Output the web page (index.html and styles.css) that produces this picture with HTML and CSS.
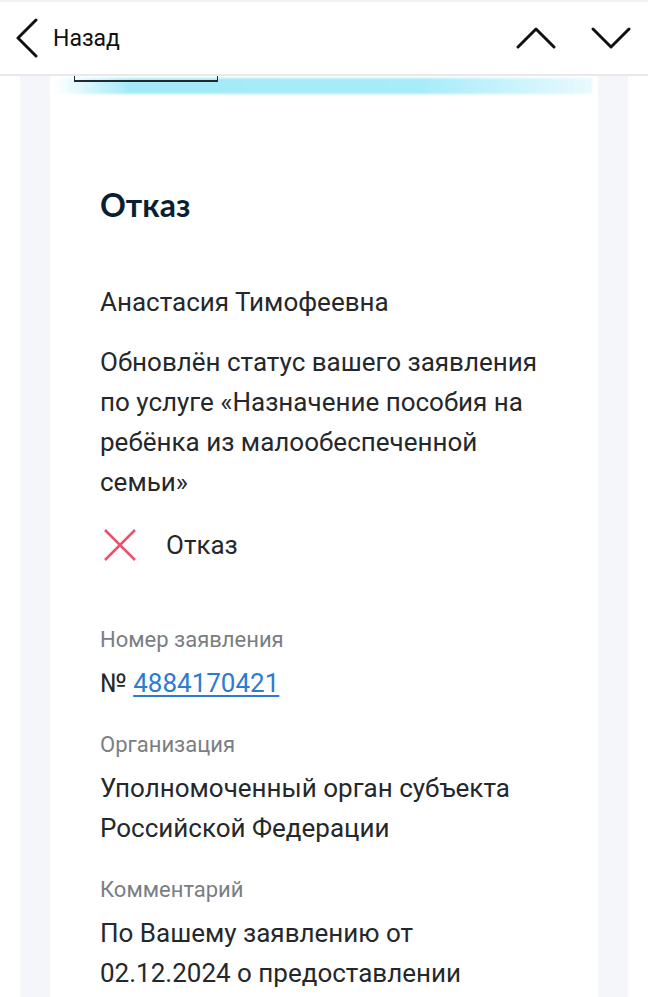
FILE: index.html
```html
<!DOCTYPE html>
<html lang="ru">
<head>
  <meta charset="UTF-8">
  <meta name="viewport" content="width=device-width, initial-scale=1">
  <title>Отказ</title>
  <link rel="stylesheet" href="styles.css">
</head>
<body>
  <header class="topbar">
    <a class="back" href="#">
      <svg class="back-icon" width="26" height="40" viewBox="0 0 26 40">
        <path d="M22 2 L4 20 L22 38" fill="none" stroke="#111" stroke-width="3" stroke-linecap="round" stroke-linejoin="round"/>
      </svg>
      <span>Назад</span>
    </a>
    <div class="nav-arrows">
      <svg width="42" height="24" viewBox="0 0 42 24">
        <path d="M3 21 L21 3 L39 21" fill="none" stroke="#111" stroke-width="3" stroke-linecap="round" stroke-linejoin="round"/>
      </svg>
      <svg width="42" height="24" viewBox="0 0 42 24">
        <path d="M3 3 L21 21 L39 3" fill="none" stroke="#111" stroke-width="3" stroke-linecap="round" stroke-linejoin="round"/>
      </svg>
    </div>
  </header>

  <main class="page">
    <div class="column">
      <div class="card">
        <div class="card-top">
          <div class="glow"></div>
          <div class="tab-edge"></div>
        </div>

        <div class="card-body">
          <h1 class="title">Отказ</h1>
          <p class="name">Анастасия Тимофеевна</p>
          <p class="text">Обновлён статус вашего заявления по услуге «Назначение пособия на ребёнка из малообеспеченной семьи»</p>

          <div class="status">
            <svg width="36" height="32" viewBox="0 0 36 32">
              <path d="M3 1 L33 31 M33 1 L3 31" fill="none" stroke="#e4566b" stroke-width="2.6"/>
            </svg>
            <span>Отказ</span>
          </div>

          <div class="field">
            <div class="label">Номер заявления</div>
            <div class="value">№ <a href="#">4884170421</a></div>
          </div>

          <div class="field">
            <div class="label">Организация</div>
            <div class="value">Уполномоченный орган субъекта Российской Федерации</div>
          </div>

          <div class="field">
            <div class="label">Комментарий</div>
            <div class="value">По Вашему заявлению от 02.12.2024 о предоставлении</div>
          </div>
        </div>
      </div>
    </div>
  </main>
</body>
</html>
```

FILE: styles.css
```css
html, body {
  margin: 0;
  padding: 0;
}
body {
  font-family: Roboto, "Noto Sans", sans-serif;
  color: #25282b;
  background: #fff;
}
.topbar {
  display: flex;
  align-items: center;
  justify-content: space-between;
  height: 76px;
  padding: 0 16px 0 14px;
  background: #fff;
  border-top: 2px solid #f1f2f3;
  border-bottom: 2px solid #e8e9eb;
  box-sizing: border-box;
  position: relative;
  z-index: 2;
}
.back {
  display: flex;
  align-items: center;
  gap: 13px;
  color: #111;
  text-decoration: none;
  font-size: 23px;
}
.back-icon {
  display: block;
}
.nav-arrows {
  display: flex;
  align-items: center;
  gap: 33px;
}
.nav-arrows svg {
  display: block;
}
.page {
  padding: 0 20px;
}
.column {
  background: #f5f6fa;
  padding: 0 30px;
}
.card {
  background: #fff;
  min-height: 921px;
}
.card-top {
  position: relative;
  height: 20px;
  padding: 2px 6px 0 5px;
}
.glow {
  height: 16px;
  background: linear-gradient(90deg, rgba(160, 233, 250, 0) 0%, #a4ebfa 14%, #a6ecfb 68%, rgba(166, 236, 251, 0.25) 100%);
  filter: blur(1px);
}
.tab-edge {
  position: absolute;
  top: -2px;
  left: 24px;
  width: 142px;
  height: 6px;
  border: 1.5px solid #1f2a35;
  border-top: none;
  border-bottom-width: 2px;
}
.card-body {
  padding: 87px 58px 0 50px;
}
.title {
  margin: 0 0 57px;
  font-family: Lato, Inter, sans-serif;
  font-weight: 700;
  font-size: 32px;
  line-height: 40px;
  color: #0b1f33;
}
.name {
  margin: 0 0 20px;
  font-size: 26px;
  line-height: 40px;
}
.text {
  margin: 0 0 23px;
  font-size: 26px;
  line-height: 40px;
}
.status {
  display: flex;
  align-items: center;
  gap: 28px;
  padding-left: 2px;
  font-size: 26px;
  line-height: 40px;
  margin-bottom: 59px;
}
.status svg {
  display: block;
  filter: blur(0.4px);
}
.field {
  margin-bottom: 26px;
}
.label {
  font-size: 22px;
  line-height: 32px;
  color: #7a7e83;
  margin-bottom: 7px;
}
.value {
  font-size: 26px;
  line-height: 40px;
}
.value a {
  color: #2b7bd3;
  text-decoration: underline;
  text-underline-offset: 3px;
}
```
